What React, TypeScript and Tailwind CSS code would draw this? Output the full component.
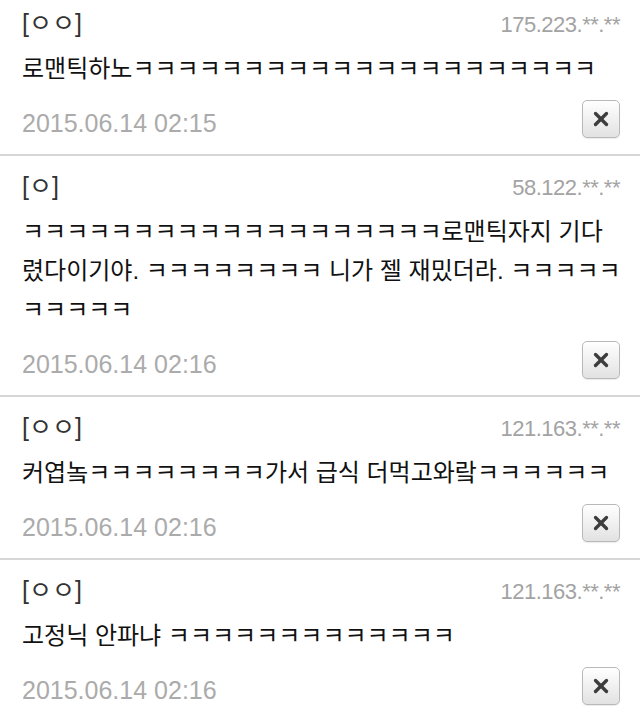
import { X } from "lucide-react";

type Comment = {
  name: string;
  ip: string;
  lines: string[];
  date: string;
};

const comments: Comment[] = [
  {
    name: "[ㅇㅇ]",
    ip: "175.223.**.**",
    lines: ["로맨틱하노" + "ㅋ".repeat(21)],
    date: "2015.06.14 02:15"
  },
  {
    name: "[ㅇ]",
    ip: "58.122.**.**",
    lines: [
      "ㅋ".repeat(19) + "로맨틱자지 기다",
      "렸다이기야. " + "ㅋ".repeat(8) + " 니가 젤 재밌더라. " + "ㅋ".repeat(5),
      "ㅋ".repeat(5)
    ],
    date: "2015.06.14 02:16"
  },
  {
    name: "[ㅇㅇ]",
    ip: "121.163.**.**",
    lines: ["커엽놐" + "ㅋ".repeat(8) + "가서 급식 더먹고와랔" + "ㅋ".repeat(6)],
    date: "2015.06.14 02:16"
  },
  {
    name: "[ㅇㅇ]",
    ip: "121.163.**.**",
    lines: ["고정닉 안파냐 " + "ㅋ".repeat(13)],
    date: "2015.06.14 02:16"
  }
];

function CommentRow({ comment }: { comment: Comment }) {
  return (
    <div className="border-b-2 border-[#d6d6d6] pb-[16px] pl-[22px] pr-[20px] pt-[14px]">
      <div className="flex items-baseline justify-between">
        <span className="text-[25px] leading-[32px] text-[#333]">{comment.name}</span>
        <span className="font-['Liberation_Sans'] text-[22px] leading-[32px] tracking-[-0.5px] text-[#a3a3a3]">
          {comment.ip}
        </span>
      </div>
      <div className="mt-[8px] text-[24px] leading-[39px] text-[#111]">
        {comment.lines.map((line, i) => (
          <div key={i} className="whitespace-pre">
            {line}
          </div>
        ))}
      </div>
      <div className="mt-[12px] flex items-end justify-between">
        <span className="font-['Liberation_Sans'] text-[25px] leading-[30px] text-[#ababab]">{comment.date}</span>
        <button
          type="button"
          className="flex h-[38px] w-[38px] items-center justify-center rounded-[5px] border border-[#b9b9b9] bg-gradient-to-b from-white to-[#e2e2e2] shadow-[0_1px_1px_rgba(0,0,0,0.08)]"
        >
          <X size={22} strokeWidth={3.6} className="text-[#3d3d3d]" />
        </button>
      </div>
    </div>
  );
}

export default function App() {
  return (
    <div className="h-[721px] w-[640px] overflow-hidden bg-white font-['Liberation_Sans','Noto_Sans_CJK_KR',sans-serif]">
      <div className="-mt-[7px]">
        {comments.map((comment, i) => (
          <CommentRow key={i} comment={comment} />
        ))}
      </div>
    </div>
  );
}
